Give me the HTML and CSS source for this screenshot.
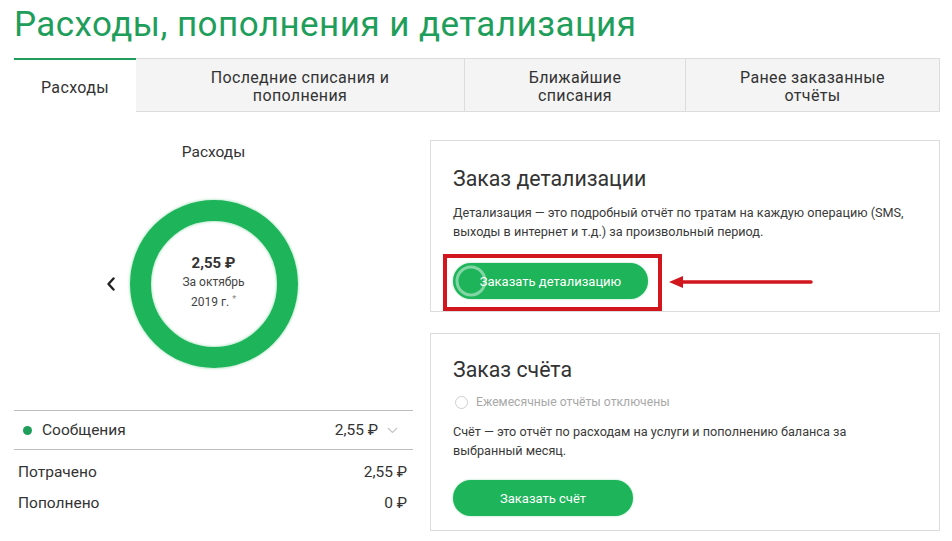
FILE: index.html
```html
<!DOCTYPE html>
<html lang="ru">
<head>
<meta charset="utf-8">
<title>Расходы, пополнения и детализация</title>
<link rel="stylesheet" href="styles.css">
</head>
<body>
<div class="page">
  <h1 class="title">Расходы, пополнения и детализация</h1>

  <div class="tabs">
    <div class="tab tab-active">Расходы</div>
    <div class="tab tab-2">Последние списания и<br>пополнения</div>
    <div class="tab tab-3">Ближайшие<br>списания</div>
    <div class="tab tab-4">Ранее заказанные<br>отчёты</div>
  </div>

  <div class="main">
    <div class="left">
      <div class="subtitle">Расходы</div>
      <div class="chart-row">
        <div class="chev-left">
          <svg width="10" height="14" viewBox="0 0 10 14"><path d="M7.5 1.5 L2.5 7 L7.5 12.5" fill="none" stroke="#222" stroke-width="2.4" stroke-linecap="round" stroke-linejoin="round"/></svg>
        </div>
        <div class="donut">
          <div class="donut-sum">2,55 ₽</div>
          <div class="donut-sub">За октябрь</div>
          <div class="donut-sub">2019 г. <span class="star">*</span></div>
        </div>
        <div class="chev-spacer"></div>
      </div>

      <div class="cat-row">
        <span class="dot"></span>
        <span class="cat-name">Сообщения</span>
        <span class="cat-sum">2,55 ₽</span>
        <svg class="chev-down" width="11" height="7" viewBox="0 0 11 7"><path d="M1 1 L5.5 5.5 L10 1" fill="none" stroke="#c4c4c4" stroke-width="1.2"/></svg>
      </div>
      <div class="total-row first">
        <span>Потрачено</span>
        <span>2,55 ₽</span>
      </div>
      <div class="total-row">
        <span>Пополнено</span>
        <span>0 ₽</span>
      </div>
    </div>

    <div class="right">
      <div class="card card-1">
        <div class="card-title">Заказ детализации</div>
        <p class="card-text">Детализация — это подробный отчёт по тратам на каждую операцию (SMS, выходы в интернет и т.д.) за произвольный период.</p>
        <div class="btn-wrap">
          <button class="btn btn-detail">Заказать детализацию</button>
          <svg class="btn-mark" width="40" height="40" viewBox="0 0 40 40"><circle cx="18" cy="20" r="14" fill="none" stroke="rgba(255,255,255,0.45)" stroke-width="3"/></svg>
          <div class="highlight"></div>
          <svg class="arrow" width="144" height="14" viewBox="0 0 144 14"><path d="M142 7 H12" stroke="#d2161e" stroke-width="3.5" stroke-linecap="round"/><path d="M0 7 L14 1 L14 13 Z" fill="#d2161e"/></svg>
        </div>
      </div>

      <div class="card card-2">
        <div class="card-title">Заказ счёта</div>
        <label class="radio-row"><span class="radio"></span>Ежемесячные отчёты отключены</label>
        <p class="card-text narrow">Счёт — это отчёт по расходам на услуги и пополнению баланса за выбранный месяц.</p>
        <button class="btn btn-bill">Заказать счёт</button>
      </div>
    </div>
  </div>
</div>
</body>
</html>
```

FILE: styles.css
```css
* { box-sizing: border-box; }

html, body {
  margin: 0;
  padding: 0;
  background: #fff;
}

body {
  font-family: "Roboto", "Liberation Sans", sans-serif;
  color: #333;
  width: 952px;
  height: 541px;
  overflow: hidden;
}

.page {
  padding: 0 12px 0 14px;
}

.title {
  margin: 0;
  height: 58px;
  padding-top: 4px;
  font-size: 35px;
  line-height: 42px;
  font-weight: 400;
  color: #1f9e5b;
  letter-spacing: 0.45px;
}

/* Tabs */
.tabs {
  display: flex;
  height: 54px;
}

.tab {
  display: flex;
  align-items: center;
  justify-content: center;
  text-align: center;
  font-size: 16px;
  line-height: 18px;
  letter-spacing: 0.35px;
  color: #333;
  background: #f4f4f4;
  border: 1px solid #dcdcdc;
  border-left: none;
  padding-top: 3px;
}

.tab-active {
  width: 122px;
  background: #fff;
  border: none;
  border-top: 2px solid #1f9e5b;
  padding-top: 4px;
}

.tab-2 { width: 329px; }
.tab-3 { width: 221px; }
.tab-4 { width: 254px; }

/* Main */
.main {
  display: flex;
  gap: 17px;
}

.left {
  width: 399px;
  padding-top: 30px;
}

.subtitle {
  text-align: center;
  font-size: 15.5px;
  line-height: 20px;
  color: #333;
}

.chart-row {
  display: flex;
  justify-content: center;
  align-items: center;
  gap: 14px;
  margin-top: 38px;
}

.chev-left, .chev-spacer {
  width: 10px;
  height: 14px;
  display: flex;
}

.donut {
  width: 168px;
  height: 168px;
  border-radius: 50%;
  border: 21px solid #1db45a;
  box-shadow: 0 0 3px rgba(29, 180, 90, 0.55), inset 0 0 3px rgba(29, 180, 90, 0.55);
  display: flex;
  flex-direction: column;
  align-items: center;
  justify-content: center;
  padding-bottom: 4px;
}

.donut-sum {
  font-size: 15px;
  font-weight: 700;
  color: #333;
  line-height: 20px;
  margin-bottom: 1px;
}

.donut-sub {
  font-size: 12px;
  line-height: 17px;
  color: #444;
}

.star {
  font-size: 9px;
  vertical-align: 4px;
  color: #888;
}

.cat-row {
  margin-top: 42px;
  height: 40px;
  border-top: 1px solid #bdbdbd;
  border-bottom: 1px solid #bdbdbd;
  display: flex;
  align-items: center;
  padding: 0 15px 0 9px;
  font-size: 15.5px;
}

.dot {
  width: 9px;
  height: 9px;
  border-radius: 50%;
  background: #1f9e5b;
  margin-right: 10px;
}

.cat-name { flex: 1; }

.cat-sum { margin-right: 9px; }

.chev-down { display: block; }

.total-row {
  display: flex;
  justify-content: space-between;
  height: 31px;
  align-items: center;
  padding: 0 6px 0 4px;
  font-size: 15.5px;
}

.total-row.first { margin-top: 6px; }

/* Right cards */
.right {
  width: 510px;
  padding-top: 28px;
  display: flex;
  flex-direction: column;
  gap: 21px;
}

.card {
  border: 1px solid #dcdcdc;
  padding: 0 20px 0 22px;
}

.card-1 {
  height: 172px;
  padding-top: 24px;
}

.card-2 {
  height: 198px;
  padding-top: 22px;
}

.card-title {
  font-size: 21.3px;
  line-height: 28px;
  color: #333;
}

.card-text {
  margin: 10px 0 0;
  font-size: 12.65px;
  line-height: 19px;
  color: #3a3a3a;
}

.card-text.narrow {
  margin-top: 11px;
  max-width: 420px;
}

.btn {
  display: block;
  border: none;
  background: #1db45a;
  color: #fff;
  font-family: inherit;
  font-size: 13px;
  height: 36px;
  border-radius: 18px;
  padding: 0;
  text-align: center;
  box-shadow: 0 0 2px rgba(29, 180, 90, 0.5);
}

.btn-wrap {
  position: relative;
  width: 195px;
  margin-top: 22px;
}

.btn-detail {
  width: 195px;
}

.btn-mark {
  position: absolute;
  left: 0;
  top: -2px;
  pointer-events: none;
}

.highlight {
  position: absolute;
  left: -10px;
  top: -9px;
  right: -14px;
  bottom: -12px;
  border: 4px solid #d2161e;
}

.arrow {
  position: absolute;
  left: 216px;
  top: 12px;
}

.radio-row {
  display: flex;
  align-items: center;
  margin-top: 9px;
  font-size: 12.2px;
  color: #a8a8a8;
  line-height: 18px;
}

.radio {
  width: 13px;
  height: 13px;
  border-radius: 50%;
  border: 1px solid #cfcfcf;
  margin: 0 8px 0 2px;
}

.btn-bill {
  width: 180px;
  margin-top: 20px;
}
```
